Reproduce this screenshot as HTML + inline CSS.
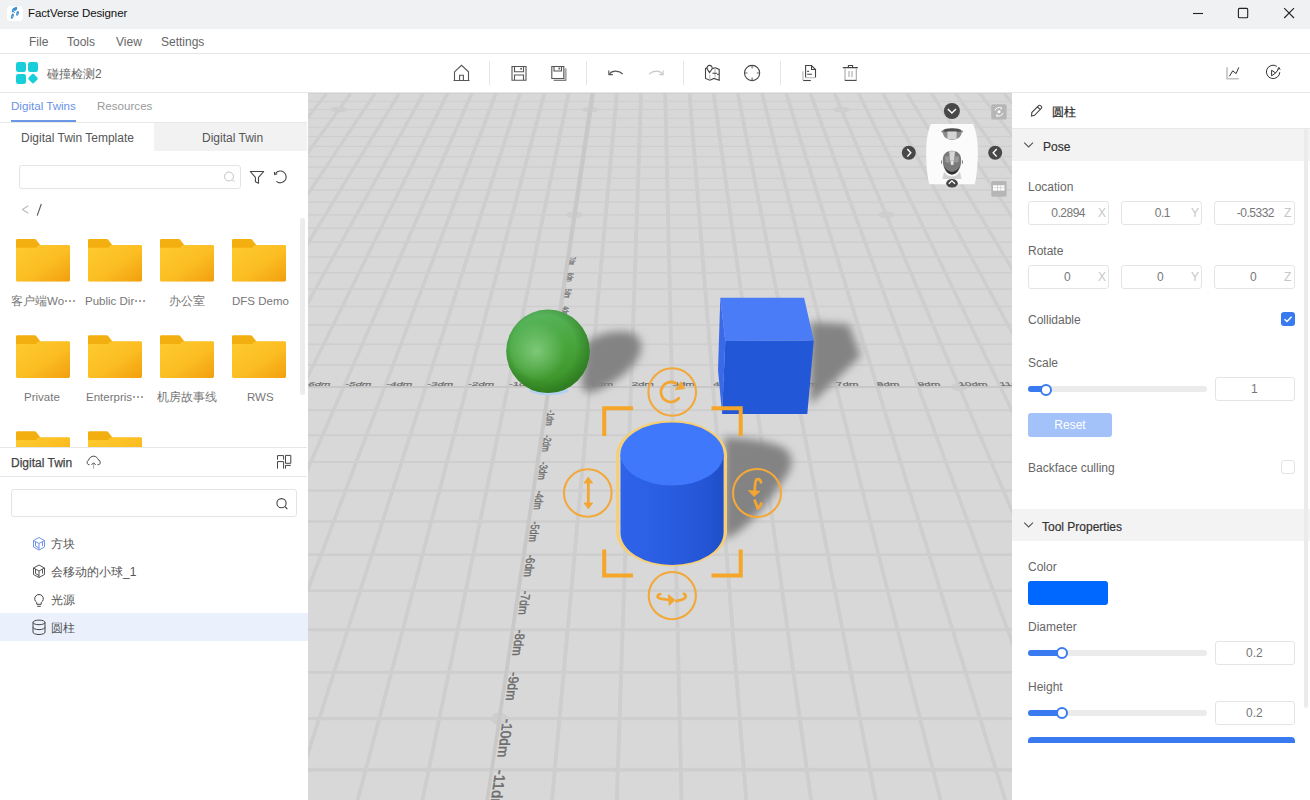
<!DOCTYPE html>
<html><head><meta charset="utf-8"><title>FactVerse Designer</title>
<style>
*{box-sizing:border-box;margin:0;padding:0}
html,body{width:1310px;height:800px;overflow:hidden;background:#fff;font-family:"Liberation Sans",sans-serif;font-size:12px;color:#333}
.a{position:absolute}
.t{position:absolute;white-space:nowrap;line-height:14px}
svg{position:absolute;overflow:hidden}
.inp{position:absolute;border:1px solid #e4e4e4;border-radius:3px;background:#fff}
</style></head><body>
<svg style="left:308px;top:93px" width="704" height="707" viewBox="308 93 704 707">
<defs>
<radialGradient id="sph" cx="0.42" cy="0.45" r="0.62" fx="0.34" fy="0.45">
<stop offset="0" stop-color="#72c46a"/><stop offset="0.35" stop-color="#4aa83f"/><stop offset="0.8" stop-color="#338f2a"/><stop offset="1" stop-color="#2a7a22"/>
</radialGradient>
<linearGradient id="cyl" x1="0" y1="0" x2="1" y2="0">
<stop offset="0" stop-color="#2e62e8"/><stop offset="0.25" stop-color="#2c60e6"/><stop offset="0.8" stop-color="#2456d6"/><stop offset="1" stop-color="#1f4ec8"/>
</linearGradient>
<filter id="gb" x="-5%" y="-5%" width="110%" height="110%"><feGaussianBlur stdDeviation="0.6"/></filter>
<filter id="blur6" x="-50%" y="-50%" width="200%" height="200%"><feGaussianBlur stdDeviation="4.2"/></filter>
<filter id="blur4" x="-50%" y="-50%" width="200%" height="200%"><feGaussianBlur stdDeviation="3"/></filter>
</defs>
<rect x="308" y="93" width="704" height="707" fill="#d8d8d8"/>
<g filter="url(#gb)">
<polygon points="206.22,91.00 210.12,91.00 -551.22,804.00 -555.12,804.00" fill="#cecece"/>
<polygon points="230.27,91.00 234.17,91.00 -486.23,804.00 -490.13,804.00" fill="#cecece"/>
<polygon points="254.33,91.00 258.23,91.00 -421.24,804.00 -425.14,804.00" fill="#cecece"/>
<polygon points="278.38,91.00 282.28,91.00 -356.25,804.00 -360.15,804.00" fill="#cecece"/>
<polygon points="302.44,91.00 306.34,91.00 -291.26,804.00 -295.16,804.00" fill="#cecece"/>
<polygon points="326.49,91.00 330.39,91.00 -226.27,804.00 -230.17,804.00" fill="#cecece"/>
<polygon points="350.54,91.00 354.44,91.00 -161.28,804.00 -165.18,804.00" fill="#cecece"/>
<polygon points="374.60,91.00 378.50,91.00 -96.30,804.00 -100.20,804.00" fill="#cecece"/>
<polygon points="398.65,91.00 402.55,91.00 -31.31,804.00 -35.21,804.00" fill="#cecece"/>
<polygon points="422.71,91.00 426.61,91.00 33.68,804.00 29.78,804.00" fill="#cecece"/>
<polygon points="446.76,91.00 450.66,91.00 98.67,804.00 94.77,804.00" fill="#cecece"/>
<polygon points="470.82,91.00 474.72,91.00 163.66,804.00 159.76,804.00" fill="#cecece"/>
<polygon points="494.87,91.00 498.77,91.00 228.65,804.00 224.75,804.00" fill="#cecece"/>
<polygon points="518.93,91.00 522.83,91.00 293.64,804.00 289.74,804.00" fill="#cecece"/>
<polygon points="542.98,91.00 546.88,91.00 358.63,804.00 354.73,804.00" fill="#cecece"/>
<polygon points="567.04,91.00 570.94,91.00 423.62,804.00 419.72,804.00" fill="#cecece"/>
<polygon points="615.15,91.00 619.05,91.00 553.60,804.00 549.70,804.00" fill="#cecece"/>
<polygon points="639.20,91.00 643.10,91.00 618.59,804.00 614.69,804.00" fill="#cecece"/>
<polygon points="663.26,91.00 667.16,91.00 683.58,804.00 679.68,804.00" fill="#cecece"/>
<polygon points="687.31,91.00 691.21,91.00 748.57,804.00 744.67,804.00" fill="#cecece"/>
<polygon points="711.37,91.00 715.27,91.00 813.55,804.00 809.65,804.00" fill="#cecece"/>
<polygon points="735.42,91.00 739.32,91.00 878.54,804.00 874.64,804.00" fill="#cecece"/>
<polygon points="759.48,91.00 763.38,91.00 943.53,804.00 939.63,804.00" fill="#cecece"/>
<polygon points="783.53,91.00 787.43,91.00 1008.52,804.00 1004.62,804.00" fill="#cecece"/>
<polygon points="807.59,91.00 811.49,91.00 1073.51,804.00 1069.61,804.00" fill="#cecece"/>
<polygon points="831.64,91.00 835.54,91.00 1138.50,804.00 1134.60,804.00" fill="#cecece"/>
<polygon points="855.70,91.00 859.60,91.00 1203.49,804.00 1199.59,804.00" fill="#cecece"/>
<polygon points="879.75,91.00 883.65,91.00 1268.48,804.00 1264.58,804.00" fill="#cecece"/>
<polygon points="903.81,91.00 907.71,91.00 1333.47,804.00 1329.57,804.00" fill="#cecece"/>
<polygon points="927.86,91.00 931.76,91.00 1398.46,804.00 1394.56,804.00" fill="#cecece"/>
<polygon points="951.92,91.00 955.82,91.00 1463.45,804.00 1459.55,804.00" fill="#cecece"/>
<polygon points="975.97,91.00 979.87,91.00 1528.44,804.00 1524.54,804.00" fill="#cecece"/>
<polygon points="1000.03,91.00 1003.93,91.00 1593.43,804.00 1589.53,804.00" fill="#cecece"/>
<polygon points="1024.08,91.00 1027.98,91.00 1658.42,804.00 1654.52,804.00" fill="#cecece"/>
<polygon points="1048.14,91.00 1052.04,91.00 1723.40,804.00 1719.50,804.00" fill="#cecece"/>
<polygon points="1072.19,91.00 1076.09,91.00 1788.39,804.00 1784.49,804.00" fill="#cecece"/>
<polygon points="1096.25,91.00 1100.15,91.00 1853.38,804.00 1849.48,804.00" fill="#cecece"/>
<polygon points="308.00,767.83 1012.00,767.83 1012.00,771.42 308.00,771.42" fill="#cecece"/>
<polygon points="308.00,717.03 1012.00,717.03 1012.00,720.35 308.00,720.35" fill="#cecece"/>
<polygon points="308.00,670.73 1012.00,670.73 1012.00,673.81 308.00,673.81" fill="#cecece"/>
<polygon points="308.00,628.35 1012.00,628.35 1012.00,631.23 308.00,631.23" fill="#cecece"/>
<polygon points="308.00,589.43 1012.00,589.43 1012.00,592.12 308.00,592.12" fill="#cecece"/>
<polygon points="308.00,553.55 1012.00,553.55 1012.00,556.08 308.00,556.08" fill="#cecece"/>
<polygon points="308.00,520.37 1012.00,520.37 1012.00,522.76 308.00,522.76" fill="#cecece"/>
<polygon points="308.00,489.59 1012.00,489.59 1012.00,491.86 308.00,491.86" fill="#cecece"/>
<polygon points="308.00,460.97 1012.00,460.97 1012.00,463.12 308.00,463.12" fill="#cecece"/>
<polygon points="308.00,434.28 1012.00,434.28 1012.00,436.33 308.00,436.33" fill="#cecece"/>
<polygon points="308.00,409.34 1012.00,409.34 1012.00,411.30 308.00,411.30" fill="#cecece"/>
<polygon points="308.00,364.06 1012.00,364.06 1012.00,365.85 308.00,365.85" fill="#cecece"/>
<polygon points="308.00,343.44 1012.00,343.44 1012.00,345.16 308.00,345.16" fill="#cecece"/>
<polygon points="308.00,324.01 1012.00,324.01 1012.00,325.67 308.00,325.67" fill="#cecece"/>
<polygon points="308.00,305.68 1012.00,305.68 1012.00,307.27 308.00,307.27" fill="#cecece"/>
<polygon points="308.00,288.34 1012.00,288.34 1012.00,289.89 308.00,289.89" fill="#cecece"/>
<polygon points="308.00,271.93 1012.00,271.93 1012.00,273.43 308.00,273.43" fill="#cecece"/>
<polygon points="308.00,256.37 1012.00,256.37 1012.00,257.82 308.00,257.82" fill="#cecece"/>
<polygon points="308.00,241.60 1012.00,241.60 1012.00,243.01 308.00,243.01" fill="#cecece"/>
<polygon points="308.00,227.56 1012.00,227.56 1012.00,228.92 308.00,228.92" fill="#cecece"/>
<polygon points="308.00,214.19 1012.00,214.19 1012.00,215.52 308.00,215.52" fill="#cecece"/>
<polygon points="308.00,201.44 1012.00,201.44 1012.00,202.74 308.00,202.74" fill="#cecece"/>
<polygon points="308.00,189.29 1012.00,189.29 1012.00,190.55 308.00,190.55" fill="#cecece"/>
<polygon points="308.00,177.68 1012.00,177.68 1012.00,178.91 308.00,178.91" fill="#cecece"/>
<polygon points="308.00,166.58 1012.00,166.58 1012.00,167.78 308.00,167.78" fill="#cecece"/>
<polygon points="308.00,155.95 1012.00,155.95 1012.00,157.13 308.00,157.13" fill="#cecece"/>
<polygon points="308.00,145.77 1012.00,145.77 1012.00,146.93 308.00,146.93" fill="#cecece"/>
<polygon points="308.00,136.01 1012.00,136.01 1012.00,137.15 308.00,137.15" fill="#cecece"/>
<polygon points="308.00,126.65 1012.00,126.65 1012.00,127.76 308.00,127.76" fill="#cecece"/>
<polygon points="308.00,117.65 1012.00,117.65 1012.00,118.75 308.00,118.75" fill="#cecece"/>
<polygon points="308.00,109.01 1012.00,109.01 1012.00,110.08 308.00,110.08" fill="#cecece"/>
<polygon points="308.00,100.69 1012.00,100.69 1012.00,101.75 308.00,101.75" fill="#cecece"/>
<polygon points="308.00,92.68 1012.00,92.68 1012.00,93.72 308.00,93.72" fill="#cecece"/>
<ellipse cx="339.08" cy="109.54" rx="8.50" ry="2.88" fill="#cecece"/>
<ellipse cx="499.39" cy="718.69" rx="8.50" ry="6.09" fill="#cecece"/>
<ellipse cx="548.89" cy="386.92" rx="8.50" ry="4.01" fill="#cecece"/>
<ellipse cx="574.56" cy="214.85" rx="8.50" ry="3.25" fill="#cecece"/>
<ellipse cx="590.28" cy="109.54" rx="8.50" ry="2.88" fill="#cecece"/>
<ellipse cx="959.33" cy="386.92" rx="8.50" ry="4.01" fill="#cecece"/>
<ellipse cx="886.22" cy="214.85" rx="8.50" ry="3.25" fill="#cecece"/>
<ellipse cx="841.47" cy="109.54" rx="8.50" ry="2.88" fill="#cecece"/>
</g>
<g filter="url(#gb)">
<polygon points="590.74,91.00 595.34,91.00 488.46,804.00 484.86,804.00" fill="#c8c8c8"/>
<polygon points="308.00,385.92 1012.00,385.92 1012.00,387.92 308.00,387.92" fill="#c8c8c8"/>
</g>
<g fill="#6c6c6c" stroke="#6c6c6c" stroke-width="0.3" font-family="Liberation Sans" font-size="10">
<text transform="matrix(1.1474,0.0000,-0.3028,0.5503,262.82,385.79)">-7dm</text>
<text transform="matrix(1.1474,0.0000,-0.2712,0.5503,303.80,385.79)">-6dm</text>
<text transform="matrix(1.1474,0.0000,-0.2396,0.5503,344.78,385.79)">-5dm</text>
<text transform="matrix(1.1474,0.0000,-0.2080,0.5503,385.76,385.79)">-4dm</text>
<text transform="matrix(1.1474,0.0000,-0.1764,0.5503,426.74,385.79)">-3dm</text>
<text transform="matrix(1.1474,0.0000,-0.1448,0.5503,467.72,385.79)">-2dm</text>
<text transform="matrix(1.1474,0.0000,-0.1132,0.5503,508.69,385.79)">-1dm</text>
<text transform="matrix(1.1474,0.0000,-0.0500,0.5503,590.65,385.79)">1dm</text>
<text transform="matrix(1.1474,0.0000,-0.0184,0.5503,631.63,385.79)">2dm</text>
<text transform="matrix(1.1474,0.0000,0.0131,0.5503,672.61,385.79)">3dm</text>
<text transform="matrix(1.1474,0.0000,0.0447,0.5503,713.59,385.79)">4dm</text>
<text transform="matrix(1.1474,0.0000,0.0763,0.5503,754.57,385.79)">5dm</text>
<text transform="matrix(1.1474,0.0000,0.1079,0.5503,795.55,385.79)">6dm</text>
<text transform="matrix(1.1474,0.0000,0.1395,0.5503,836.53,385.79)">7dm</text>
<text transform="matrix(1.1474,0.0000,0.1711,0.5503,877.51,385.79)">8dm</text>
<text transform="matrix(1.1474,0.0000,0.2027,0.5503,918.48,385.79)">9dm</text>
<text transform="matrix(1.1474,0.0000,0.2343,0.5503,959.46,385.79)">10dm</text>
<text transform="matrix(1.1474,0.0000,0.2659,0.5503,1000.44,385.79)">11dm</text>
<text transform="matrix(1.1474,0.0000,0.2975,0.5503,1041.42,385.79)">12dm</text>
<text transform="matrix(-0.2409,1.6526,-1.6136,-0.0000,487.38,825.78)">-12dm</text>
<text transform="matrix(-0.2180,1.4957,-1.5351,-0.0000,495.57,769.63)">-11dm</text>
<text transform="matrix(-0.1982,1.3601,-1.4638,-0.0000,502.99,718.69)">-10dm</text>
<text transform="matrix(-0.1811,1.2421,-1.3989,-0.0000,509.76,672.27)">-9dm</text>
<text transform="matrix(-0.1660,1.1388,-1.3395,-0.0000,515.95,629.79)">-8dm</text>
<text transform="matrix(-0.1528,1.0480,-1.2849,-0.0000,521.64,590.78)">-7dm</text>
<text transform="matrix(-0.1410,0.9675,-1.2346,-0.0000,526.88,554.81)">-6dm</text>
<text transform="matrix(-0.1306,0.8960,-1.1881,-0.0000,531.73,521.56)">-5dm</text>
<text transform="matrix(-0.1213,0.8321,-1.1450,-0.0000,536.22,490.72)">-4dm</text>
<text transform="matrix(-0.1129,0.7749,-1.1049,-0.0000,540.40,462.05)">-3dm</text>
<text transform="matrix(-0.1054,0.7233,-1.0675,-0.0000,544.30,435.31)">-2dm</text>
<text transform="matrix(-0.0986,0.6767,-1.0326,-0.0000,547.94,410.32)">-1dm</text>
<text transform="matrix(-0.0869,0.5961,-0.9691,-0.0000,554.55,364.95)">1dm</text>
<text transform="matrix(-0.0818,0.5611,-0.9402,-0.0000,557.57,344.30)">2dm</text>
<text transform="matrix(-0.0771,0.5291,-0.9130,-0.0000,560.40,324.84)">3dm</text>
<text transform="matrix(-0.0728,0.4997,-0.8873,-0.0000,563.08,306.47)">4dm</text>
<text transform="matrix(-0.0689,0.4728,-0.8630,-0.0000,565.61,289.12)">5dm</text>
<text transform="matrix(-0.0653,0.4479,-0.8401,-0.0000,568.00,272.68)">6dm</text>
<text transform="matrix(-0.0619,0.4250,-0.8183,-0.0000,570.28,257.10)">7dm</text>
</g>
<!-- shadows -->
<g filter="url(#blur6)" fill="#838383">
<path d="M586 344 C594 334 614 330 628 332 C642 334 644 348 638 358 C630 372 612 384 596 391 C586 395 580 390 582 378 Z"/>
<path d="M810 322 L849 324.5 L860.5 356 L810 405 Z"/>
<path d="M724 437 C746 438 770 441 784 448 C794 455 793 467 787 475 C777 490 766 506 754 518 C742 530 732 537 724 539 Z"/>
</g>
<!-- sphere -->
<linearGradient id="sphb" x1="0" y1="0" x2="0.25" y2="1">
<stop offset="0" stop-color="#5cb866"/><stop offset="0.5" stop-color="#4aa840"/><stop offset="1" stop-color="#3d9428"/>
</linearGradient>
<radialGradient id="sphh" cx="0.36" cy="0.5" r="0.35">
<stop offset="0" stop-color="#8fd38c" stop-opacity="0.75"/><stop offset="1" stop-color="#8fd38c" stop-opacity="0"/>
</radialGradient>
<radialGradient id="sphr" cx="0.45" cy="0.45" r="0.55">
<stop offset="0.7" stop-color="#1f5f18" stop-opacity="0"/><stop offset="1" stop-color="#1f5f18" stop-opacity="0.45"/>
</radialGradient>
<path d="M530 390 A 22 7 0 0 0 568 390" stroke="#b4d0f2" stroke-width="3.5" fill="none"/>
<circle cx="548" cy="351.3" r="41.8" fill="url(#sphb)"/>
<circle cx="548" cy="351.3" r="41.8" fill="url(#sphh)"/>
<circle cx="548" cy="351.3" r="41.8" fill="url(#sphr)"/>
<!-- cube -->
<polygon points="720.3,297.8 804.1,297.8 813.8,340.4 725.3,341" fill="#497cf6"/>
<polygon points="720.3,297.8 725.3,341 722.1,414 718,370" fill="#3a6ae8"/>
<polygon points="725.3,341 813.8,340.4 807.3,414 722.1,414" fill="#2257d8"/>
<!-- cylinder -->
<path d="M617.6 454 V533 A54 34 0 0 0 725.4 533 V454 A54 34 0 0 0 617.6 454 Z" fill="none" stroke="#f6cf74" stroke-width="3.2"/>
<path d="M620.5 454 V532.7 A51.5 32.3 0 0 0 723.5 532.7 V454 Z" fill="url(#cyl)"/>
<ellipse cx="672" cy="454" rx="51.6" ry="31.6" fill="#3f78fa"/>
<!-- gizmo brackets -->
<g fill="none" stroke="#f5a628" stroke-width="4" stroke-linecap="butt">
<path d="M604.2 436 V408.3 H633"/>
<path d="M711.5 408.3 H740.7 V436"/>
<path d="M604.2 549.5 V575.5 H633"/>
<path d="M711.5 575.5 H740.7 V549.5"/>
</g>
<g fill="none" stroke="#f2a83a" stroke-width="2.1">
<circle cx="672.2" cy="392" r="23.8"/>
<circle cx="587.8" cy="493" r="23.8"/>
<circle cx="757" cy="493" r="24"/>
<circle cx="672.3" cy="595.6" r="23.6"/>
</g>
<g fill="none" stroke="#f3a632" stroke-width="2.8" stroke-linecap="round" stroke-linejoin="round">
<path d="M678.8 398.2 A 10 10 0 1 1 675.8 383.3"/>
<path d="M588.3 482 V504"/>
<path d="M660.2 594.2 C657.3 594.8 656.8 597.3 659.2 598.3 C662 599.3 666 599.6 669.5 599.8"/>
<path d="M676.5 601 C680.5 600.3 684 599.5 685.3 597.5 C686.2 596 685.5 594.3 684 593.8"/>
<path d="M761 482.4 C760.5 479.3 758 478.2 756.2 480 C755.3 481 755 484 754.7 491"/>
<path d="M754.8 500.6 L757.7 508.3 C759.5 507 760.8 505.5 761.2 503.5"/>
</g>
<g fill="#f3a632" stroke="#f3a632" stroke-width="0.8" stroke-linejoin="round">
<path d="M675.2 389.8 L684.6 388.6 L681.2 381.6 Z"/>
<path d="M588.3 477.1 L592.6 483 H584 Z M588.3 508.8 L592.6 503 H584 Z"/>
<path d="M668.4 594.6 L675 600.1 L669.2 605.4 Z"/>
<path d="M748.4 490.6 L760 491.3 L754 496.6 Z"/>
</g>
<!-- nav cube -->
<path d="M931 123.9 H973 C975.8 130 977.8 138 977.8 152 C977.8 166 976.5 177 974.7 184.3 H929.3 C927.4 177 926.2 166 926.2 152 C926.2 138 928.2 130 931 123.9 Z" fill="#fbfbfb"/>
<path d="M941.2 131.8 C941.5 128.2 962.5 128.2 963.2 131.8 L961.6 133 C960.8 137.5 957 139.8 952.2 139.8 C947.4 139.8 943.6 137.5 942.8 133 Z" fill="#8c8c8c"/>
<path d="M943.2 130.2 C945 127.5 959.5 127.5 961.2 130.2 L960.5 131.8 H944 Z" fill="#4f4f4f"/>
<path d="M947.4 131.6 H956.6 V138.4 C954.5 139.6 949.5 139.6 947.4 138.4 Z" fill="#d4d4d4"/>
<path d="M944 171.5 C947 178 957 178 960 171.5 L961.5 179 H942.5 Z" fill="#d2d2d2"/>
<path d="M942.8 161 C942.6 154.5 946 150.8 952 150.8 C958 150.8 961.4 154.5 961.2 161 C961 168.5 957.5 174.5 952 174.5 C946.5 174.5 943 168.5 942.8 161 Z" fill="#7a7a7a"/>
<path d="M944 165 C945.5 171 948.5 174.5 952 174.5 C955.5 174.5 958.5 171 960 165 C958.5 169.5 955.5 171.8 952 171.8 C948.5 171.8 945.5 169.5 944 165 Z" fill="#2e2e2e"/>
<path d="M949.2 151.2 H955 L954.2 160.5 H949.8 Z" fill="#d6d6d6"/>
<path d="M950.4 160.5 H953.8 L953.3 165 H950.9 Z" fill="#e2e2e2"/>
<path d="M945 156.5 H949.6 V163 L945.6 162 Z M954.4 156.5 H959 L958.4 162 L954.4 163 Z" fill="#9a9a9a"/>
<path d="M941.3 159.8 C940.6 161.5 941 163.5 942.3 164.5 Z M962.7 159.8 C963.4 161.5 963 163.5 961.7 164.5 Z" fill="#555"/>
<circle cx="951.9" cy="111" r="8" fill="#484848"/>
<path d="M947.8 109 L951.9 113 L956 109" stroke="#fff" stroke-width="1.4" fill="none"/>
<circle cx="908.8" cy="152.8" r="7" fill="#484848"/>
<path d="M907.3 149 L910.8 152.8 L907.3 156.6" stroke="#fff" stroke-width="1.4" fill="none"/>
<circle cx="995.2" cy="152.8" r="7" fill="#484848"/>
<path d="M996.7 149 L993.2 152.8 L996.7 156.6" stroke="#fff" stroke-width="1.4" fill="none"/>
<ellipse cx="952" cy="183.2" rx="5.8" ry="4.3" fill="#484848"/>
<path d="M948.8 183.8 L951.9 180.8 L955 183.8" stroke="#fff" stroke-width="1.2" fill="none"/>
<rect x="991.3" y="104.2" width="15.3" height="15.2" rx="1.5" fill="#b6b6b6"/>
<path d="M995 110.5 A4.3 4.3 0 0 1 1001.5 108.2 M1003 113 A4.3 4.3 0 0 1 996.5 115.4" stroke="#fff" stroke-width="1" fill="none"/>
<path d="M1000.6 107.2 L1002 108.4 L1000.4 109.4 M997.4 114.4 L996 115.6 L997.6 116.6" stroke="#fff" stroke-width="0.8" fill="none"/>
<circle cx="999" cy="111.8" r="1.5" fill="#fff"/>
<rect x="991.3" y="181" width="15.3" height="15.8" rx="1.5" fill="#b6b6b6"/>
<g fill="#fff"><rect x="993" y="185.3" width="4.3" height="2.3"/><rect x="997.8" y="185.3" width="2.8" height="2.3"/><rect x="1001.1" y="185.3" width="3.4" height="2.3"/>
<rect x="993" y="188.1" width="4.3" height="2.5"/><rect x="997.8" y="188.1" width="2.8" height="2.5"/><rect x="1001.1" y="188.1" width="3.4" height="2.5"/></g>
</svg>
<!-- title bar -->
<div class="a" style="left:0;top:0;width:1310px;height:29px;background:#eff1f3"></div>
<div class="a" style="left:7px;top:5.5px;width:16.2px;height:15.6px;background:#fff;border-radius:4px"></div>
<svg style="left:0;top:0" width="28" height="28" viewBox="0 0 28 28">
<g fill="#3f8fd2">
<ellipse cx="13.5" cy="10" rx="1.4" ry="2.6" transform="rotate(30 13.5 10)"/>
<ellipse cx="15.8" cy="8.8" rx="1.3" ry="2.1" transform="rotate(25 15.8 8.8)"/>
<ellipse cx="17.5" cy="13.4" rx="1.3" ry="2.5" transform="rotate(15 17.5 13.4)"/>
<ellipse cx="12.4" cy="16.2" rx="1.3" ry="2.8" transform="rotate(18 12.4 16.2)"/>
<circle cx="14.3" cy="12.4" r="0.5"/>
</g>
<g fill="#8fd0f5"><circle cx="13.2" cy="10.3" r="0.6"/><circle cx="17.4" cy="13.8" r="0.6"/><circle cx="12.4" cy="16.6" r="0.6"/></g>
</svg>
<div class="t" style="left:28px;top:6px;font-size:11.5px;color:#111;letter-spacing:-0.1px">FactVerse Designer</div>
<svg style="left:1190px;top:6px" width="110" height="16" viewBox="1190 6 110 16">
<path d="M1193 13.5h10" stroke="#222" stroke-width="1.1" fill="none"/>
<rect x="1238.4" y="8.4" width="9.3" height="9.3" rx="1" stroke="#222" stroke-width="1.1" fill="none"/>
<path d="M1284.2 8.2l9.8 9.8M1294 8.2l-9.8 9.8" stroke="#222" stroke-width="1.1" fill="none"/>
</svg>
<!-- menu -->
<div class="a" style="left:0;top:53px;width:1310px;height:1px;background:#e6e6e6"></div>
<div class="t" style="left:29px;top:35px;color:#666">File</div>
<div class="t" style="left:67px;top:35px;color:#666">Tools</div>
<div class="t" style="left:116px;top:35px;color:#666">View</div>
<div class="t" style="left:161px;top:35px;color:#666">Settings</div>
<!-- toolbar -->
<div class="a" style="left:0;top:92px;width:1310px;height:1px;background:#e6e6e6"></div>
<svg style="left:16px;top:62px" width="23" height="23" viewBox="0 0 23 23">
<rect x="0" y="0" width="10" height="10" rx="2.2" fill="#18cfd9"/>
<rect x="12" y="0" width="10" height="10" rx="2.2" fill="#18cfd9"/>
<rect x="0" y="12" width="10" height="10" rx="2.2" fill="#18cfd9"/>
<rect x="13.2" y="12.8" width="7.6" height="7.6" rx="1.6" fill="#18cfd9" transform="rotate(45 17 16.6)"/>
</svg>
<div class="t" style="left:47px;top:67px;color:#666">碰撞检测2</div>
<svg style="left:440px;top:55px" width="430" height="37" viewBox="440 55 430 37" fill="none" stroke="#555" stroke-width="1.1">
<!-- home -->
<path d="M454.5 71.8 L461.5 65.3 L468.5 71.8 V80.3 M454.5 71.8 V80.3 M453.5 80.5 H469.5 M459.6 80.3 V75.3 H463.4 V80.3"/>
<!-- separators -->
<path d="M489.5 61 V85 M586.5 61 V85 M683.5 61 V85 M780.5 61 V85" stroke="#e6e6e6" stroke-width="1"/>
<!-- save -->
<path d="M512 66.5 H526 V80.3 H512 Z M514.5 66.5 V71.8 H523.5 V66.5 M514.5 80.3 V75 H523.5 V80.3"/>
<rect x="520.3" y="67.8" width="1.6" height="1.8" fill="#555" stroke="none"/>
<!-- save as -->
<path d="M551.8 66.5 H563.8 V78.5 H551.8 Z M554 66.5 V71 H561.5 V66.5 M553.6 80.3 H565.8 V68.5" />
<rect x="558.5" y="67.6" width="1.6" height="1.8" fill="#555" stroke="none"/>
<rect x="564.2" y="69" width="1.8" height="10.5" fill="#aaa" stroke="none"/>
<!-- undo -->
<path d="M609.5 73.8 C612 70.5 618.5 70 622.8 74" />
<path d="M608.8 70.6 V74.6 H612.8" stroke-linejoin="round"/>
<!-- redo -->
<path d="M662.5 73.8 C660 70.5 653.5 70 649.2 74" stroke="#c8c8c8"/>
<path d="M663.2 70.6 V74.6 H659.2" stroke="#c8c8c8"/>
<!-- map -->
<path d="M707.6 67.9 L705.5 68.5 V78.5 L709.8 80.2 L714 78.4 L719.2 80.2 V69.4 L715.3 67.8 L712.3 68.6" stroke="#444"/>
<path d="M709.6 72.6 L707.2 69 A2.6 2.6 0 1 1 712 69 Z" stroke="#444"/>
<path d="M709.8 74.5 V79.5 M715 68.5 V77.5" stroke="#bdbdbd" stroke-width="1.2"/>
<path d="M712.4 73.3 H716.9 M716.9 74.3 H719.2" stroke="#444"/>
<!-- target -->
<circle cx="752.1" cy="73" r="7.6" stroke="#444"/>
<path d="M752.1 65.4 V68.4 M752.1 77.6 V80.6 M744.5 73 H747.5 M756.7 73 H759.7" stroke="#666"/>
<!-- copy -->
<path d="M805.6 77.4 V65.5 H811.5 L815.5 69.5 V77.4 M811.5 65.5 V69.5 H815.5 M807.2 71.4 H808.9 M807.2 74.3 H812" stroke="#444"/>
<path d="M805.8 77.7 H815.3" stroke="#bbb"/>
<path d="M802.9 71.2 V80" stroke="#bbb" stroke-width="1.2"/>
<path d="M803.2 80.5 H810.8" stroke="#444"/>
<!-- trash -->
<path d="M842.8 67.6 H857.8 M848.4 67.4 V65.5 H852.6 V67.4" stroke="#444"/>
<path d="M845 68.2 V80.2 M856.3 68.2 V80.2 M849 71 V77 M852 71 V77" stroke="#a8a8a8"/>
<path d="M844.8 80.4 H856.5" stroke="#444"/>
</svg>
<svg style="left:1220px;top:60px" width="70" height="26" viewBox="1220 60 70 26" fill="none" stroke="#333" stroke-width="1">
<path d="M1227 67.2 V78.8 H1238.8" stroke="#c2c2c2" stroke-width="1.6"/>
<path d="M1229.4 76.3 L1232.7 70.8 L1236.1 73.6 L1238.8 67.4"/>
<path d="M1276.8 66.3 A6.7 6.7 0 1 0 1279.8 72.2"/>
<path d="M1271.6 70.2 V75.8 L1275.6 73 Z"/>
<path d="M1275.6 73 L1278.9 68.6 M1277.6 69.6 L1278.9 67.4 L1280.2 69.6"/>
</svg>
<!-- left panel -->

<div class="t" style="left:11px;top:99px;color:#6a93e8;font-size:11.6px">Digital Twins</div>
<div class="a" style="left:11px;top:120px;width:65px;height:2px;background:#6b98e6"></div>
<div class="t" style="left:97px;top:99px;color:#9a9a9a;font-size:11.6px">Resources</div>
<div class="a" style="left:0;top:122px;width:307px;height:1px;background:#e8e8e8"></div>
<div class="a" style="left:154px;top:123px;width:153px;height:28px;background:#f2f2f2"></div>
<div class="t" style="left:21px;top:131px;color:#555">Digital Twin Template</div>
<div class="t" style="left:202px;top:131px;color:#555">Digital Twin</div>
<div class="inp" style="left:19px;top:165px;width:222px;height:24px"></div>
<svg style="left:218px;top:165px" width="80" height="24" viewBox="218 165 80 24" fill="none">
<circle cx="229" cy="176.5" r="4.5" stroke="#c4c4c4" stroke-width="1"/>
<path d="M232.3 179.8 L234.5 182" stroke="#c4c4c4" stroke-width="1"/>
<path d="M250.3 171.5 H263.7 L258.5 177.4 V183.2 L255.4 181.8 V177.4 Z" stroke="#444" stroke-width="1.1" stroke-linejoin="round"/>
<path d="M276.4 181.4 A5.9 5.9 0 1 0 275.6 173.3" stroke="#444" stroke-width="1.1"/>
<path d="M274.4 172 L274.7 174.6 L277.2 173.8" stroke="#444" stroke-width="1.1"/>
</svg>
<svg style="left:18px;top:200px" width="30" height="20" viewBox="18 200 30 20" fill="none">
<path d="M28.3 205.8 L22.5 209.5 L28.3 213.2" stroke="#bbb" stroke-width="1.1"/>
<path d="M41.3 204 L37.2 215.6" stroke="#555" stroke-width="1.1"/>
</svg>
<svg style="left:0;top:218px" width="300" height="229" viewBox="0 218 300 229">
<defs>
<linearGradient id="fg" x1="0" y1="0" x2="1" y2="1">
<stop offset="0" stop-color="#fecb2e"/><stop offset="0.55" stop-color="#fbbd22"/><stop offset="1" stop-color="#f29f0d"/>
</linearGradient>
<symbol id="fold" viewBox="0 0 54 43" width="54" height="43">
<path d="M0 1.5 Q0 0.3 1.5 0.3 H18.8 Q19.6 0.3 20.2 1 L24.4 6.5 H52.5 Q54 6.5 54 8 V12 H0 Z" fill="#f3ae10"/>
<path d="M0 10.2 Q0 9 1.2 9 H20.3 L22.5 6.6 H52.6 Q54 6.6 54 8 V41.6 Q54 43 52.6 43 H1.4 Q0 43 0 41.6 Z" fill="url(#fg)"/>
</symbol>
</defs>
<use href="#fold" x="16" y="238.7"/><use href="#fold" x="88" y="238.7"/><use href="#fold" x="160" y="238.7"/><use href="#fold" x="232" y="238.7"/>
<use href="#fold" x="16" y="335"/><use href="#fold" x="88" y="335"/><use href="#fold" x="160" y="335"/><use href="#fold" x="232" y="335"/>
<use href="#fold" x="16" y="431"/><use href="#fold" x="88" y="431"/>
</svg>
<div class="a" style="left:0;top:447px;width:307px;height:353px;background:#fff"></div>
<div class="t" style="left:11px;top:294px;color:#777;font-size:11.5px">客户端Wo⋯</div>
<div class="t" style="left:85px;top:294px;color:#777;font-size:11.5px">Public Dir⋯</div>
<div class="t" style="left:169px;top:294px;color:#777;font-size:11.5px">办公室</div>
<div class="t" style="left:232px;top:294px;color:#777;font-size:11.5px">DFS Demo</div>
<div class="t" style="left:24px;top:390px;color:#777;font-size:11.5px">Private</div>
<div class="t" style="left:86px;top:390px;color:#777;font-size:11.5px">Enterpris⋯</div>
<div class="t" style="left:157px;top:390px;color:#777;font-size:11.5px">机房故事线</div>
<div class="t" style="left:247px;top:390px;color:#777;font-size:11.5px">RWS</div>
<div class="a" style="left:300px;top:218px;width:5px;height:177px;background:#ececec;border-radius:3px"></div>
<div class="a" style="left:0;top:447px;width:307px;height:1px;background:#e6e6e6"></div>
<div class="t" style="left:11px;top:456px;color:#444;font-size:12px;-webkit-text-stroke:0.25px #444">Digital Twin</div>
<svg style="left:80px;top:450px" width="220" height="26" viewBox="80 450 220 26" fill="none" stroke="#444" stroke-width="1">
<path d="M89.5 464.6 H88.6 C86.8 464.6 86.6 460.6 88.6 460.2 C89.6 457.2 91.5 456.2 93.8 456.2 C96.5 456.2 97.5 458.2 98.2 459.6 C100.6 460.2 101 464.6 98.6 464.6 H97.5"/>
<path d="M93.6 468.6 V463.2" stroke="#aaa"/>
<path d="M91.5 464.9 L93.6 462.8 L95.7 464.9"/>
<path d="M277.5 459.6 V455.6 H283.6 V459.6 M277.5 468.6 V461.6 H283.6 V468.6 M285.5 455.4 H290.8 V463.3 H285.5 Z M285.5 468.6 V465.4 H290.8"/>
</svg>
<div class="a" style="left:0;top:476px;width:307px;height:1px;background:#e8e8e8"></div>
<div class="inp" style="left:11px;top:489px;width:286px;height:28px"></div>
<svg style="left:270px;top:492px" width="24" height="22" viewBox="270 492 24 22" fill="none" stroke="#444" stroke-width="1.1">
<circle cx="281.5" cy="503.2" r="4.6"/><path d="M285 506.7 L287.3 509"/>
</svg>
<div class="a" style="left:0;top:613px;width:308px;height:28px;background:#eaf0fc"></div>
<svg style="left:28px;top:533px" width="22" height="105" viewBox="28 533 22 105" fill="none" stroke-width="1">
<g stroke="#7096e4"><path d="M39 537.5 L44.5 540.5 V547 L39 550 L33.5 547 V540.5 Z M33.5 540.5 L39 543.5 L44.5 540.5 M39 543.5 V550"/><path d="M35.5 541.6 V546 L39 548 M42.5 541.6 V546"/></g>
<g stroke="#555"><path d="M39 565 L44.5 568 V574.5 L39 577.5 L33.5 574.5 V568 Z M33.5 568 L39 571 L44.5 568 M39 571 V577.5"/><path d="M35.5 569.1 V573.5 L39 575.5 M42.5 569.1 V573.5"/></g>
<g stroke="#444"><path d="M36.8 602.5 A4.3 4.3 0 1 1 41.2 602.5 V604.3 H36.8 Z M37.2 606.3 H40.8"/></g>
<g stroke="#444"><ellipse cx="39" cy="622.4" rx="6" ry="2.3"/><path d="M33 622.4 V632.2 A6 2.3 0 0 0 45 632.2 V622.4 M33 627.3 A6 2.3 0 0 0 45 627.3"/></g>
</svg>
<div class="t" style="left:51px;top:537px;color:#555">方块</div>
<div class="t" style="left:51px;top:565px;color:#555">会移动的小球_1</div>
<div class="t" style="left:51px;top:593px;color:#555">光源</div>
<div class="t" style="left:51px;top:621px;color:#555">圆柱</div>
<!-- right panel -->
<div class="a" style="left:1012px;top:93px;width:298px;height:707px;background:#fff"></div>

<svg style="left:1028px;top:102px" width="18" height="18" viewBox="1028 102 18 18" fill="none" stroke="#444" stroke-width="1.1">
<path d="M1031.5 116 L1031.8 112.6 L1038.6 105.6 A1.3 1.3 0 0 1 1040.5 105.6 L1041.3 106.4 A1.3 1.3 0 0 1 1041.3 108.3 L1034.5 115.3 Z M1037.5 106.8 L1040.2 109.5"/>
</svg>
<div class="t" style="left:1052px;top:105px;color:#333;-webkit-text-stroke:0.25px #333">圆柱</div>
<div class="a" style="left:1012px;top:128px;width:298px;height:1px;background:#e8e8e8"></div>
<div class="a" style="left:1012px;top:129px;width:298px;height:32px;background:#f3f3f3"></div>
<svg style="left:1020px;top:138px" width="16" height="14" viewBox="1020 138 16 14" fill="none" stroke="#555" stroke-width="1.1"><path d="M1024.2 142.6 L1028.6 147 L1033 142.6"/></svg>
<div class="t" style="left:1043px;top:140px;color:#333;font-size:12px;-webkit-text-stroke:0.2px #333">Pose</div>
<div class="t" style="left:1028px;top:180px;color:#666">Location</div>
<div class="inp" style="left:1028px;top:201px;width:81px;height:24px"></div>
<div class="inp" style="left:1121px;top:201px;width:81px;height:24px"></div>
<div class="inp" style="left:1214px;top:201px;width:81px;height:24px"></div>
<div class="t" style="left:1028px;top:206px;width:57px;text-align:right;color:#777;letter-spacing:-0.5px">0.2894</div>
<div class="t" style="left:1098px;top:206px;color:#c6c6c6">X</div>
<div class="t" style="left:1121px;top:206px;width:49px;text-align:right;color:#777;letter-spacing:-0.5px">0.1</div>
<div class="t" style="left:1191px;top:206px;color:#c6c6c6">Y</div>
<div class="t" style="left:1214px;top:206px;width:60px;text-align:right;color:#777;letter-spacing:-0.5px">-0.5332</div>
<div class="t" style="left:1284px;top:206px;color:#c6c6c6">Z</div>
<div class="t" style="left:1028px;top:244px;color:#666">Rotate</div>
<div class="inp" style="left:1028px;top:265px;width:81px;height:24px"></div>
<div class="inp" style="left:1121px;top:265px;width:81px;height:24px"></div>
<div class="inp" style="left:1214px;top:265px;width:81px;height:24px"></div>
<div class="t" style="left:1064px;top:270px;color:#777">0</div>
<div class="t" style="left:1098px;top:270px;color:#c6c6c6">X</div>
<div class="t" style="left:1157px;top:270px;color:#777">0</div>
<div class="t" style="left:1191px;top:270px;color:#c6c6c6">Y</div>
<div class="t" style="left:1250px;top:270px;color:#777">0</div>
<div class="t" style="left:1284px;top:270px;color:#c6c6c6">Z</div>
<div class="t" style="left:1028px;top:313px;color:#666">Collidable</div>
<div class="a" style="left:1281px;top:312px;width:14px;height:14px;background:#3a7af0;border-radius:3px"></div>
<svg style="left:1281px;top:312px" width="14" height="14" viewBox="0 0 14 14" fill="none"><path d="M3.5 7.2 L6 9.6 L10.6 4.8" stroke="#fff" stroke-width="1.4"/></svg>
<div class="t" style="left:1028px;top:356px;color:#666">Scale</div>
<div class="a" style="left:1028px;top:386px;width:179px;height:6px;background:#ebebeb;border-radius:3px"></div>
<div class="a" style="left:1028px;top:386px;width:18px;height:6px;background:#3a7af0;border-radius:3px"></div>
<div class="a" style="left:1040px;top:383.5px;width:12px;height:12px;background:#fff;border:2px solid #3a7af0;border-radius:50%"></div>
<div class="inp" style="left:1215px;top:377px;width:80px;height:24px"></div>
<div class="t" style="left:1251px;top:382px;color:#777">1</div>
<div class="a" style="left:1028px;top:413px;width:84px;height:24px;background:#a4c2fa;border-radius:3px"></div>
<div class="t" style="left:1028px;top:418px;width:84px;text-align:center;color:#fff">Reset</div>
<div class="t" style="left:1028px;top:461px;color:#666">Backface culling</div>
<div class="a" style="left:1281px;top:460px;width:14px;height:14px;border:1px solid #e3e3e3;border-radius:3px"></div>
<div class="a" style="left:1012px;top:509px;width:298px;height:32px;background:#f3f3f3"></div>
<svg style="left:1020px;top:518px" width="16" height="14" viewBox="1020 518 16 14" fill="none" stroke="#555" stroke-width="1.1"><path d="M1024.2 522.6 L1028.6 527 L1033 522.6"/></svg>
<div class="t" style="left:1042px;top:520px;color:#333;font-size:12px;-webkit-text-stroke:0.2px #333">Tool Properties</div>
<div class="t" style="left:1028px;top:560px;color:#666">Color</div>
<div class="a" style="left:1028px;top:581px;width:80px;height:24px;background:#0068ff;border-radius:3px"></div>
<div class="t" style="left:1028px;top:620px;color:#666">Diameter</div>
<div class="a" style="left:1028px;top:650px;width:179px;height:6px;background:#ebebeb;border-radius:3px"></div>
<div class="a" style="left:1028px;top:650px;width:34px;height:6px;background:#3a7af0;border-radius:3px"></div>
<div class="a" style="left:1056px;top:647px;width:12px;height:12px;background:#fff;border:2px solid #3a7af0;border-radius:50%"></div>
<div class="inp" style="left:1215px;top:641px;width:80px;height:24px"></div>
<div class="t" style="left:1246px;top:646px;color:#777">0.2</div>
<div class="t" style="left:1028px;top:680px;color:#666">Height</div>
<div class="a" style="left:1028px;top:710px;width:179px;height:6px;background:#ebebeb;border-radius:3px"></div>
<div class="a" style="left:1028px;top:710px;width:34px;height:6px;background:#3a7af0;border-radius:3px"></div>
<div class="a" style="left:1056px;top:707px;width:12px;height:12px;background:#fff;border:2px solid #3a7af0;border-radius:50%"></div>
<div class="inp" style="left:1215px;top:701px;width:80px;height:24px"></div>
<div class="t" style="left:1246px;top:706px;color:#777">0.2</div>
<div class="a" style="left:1028px;top:737px;width:267px;height:6px;background:#3a7af0;border-radius:4px 4px 0 0"></div>
<div class="a" style="left:1304px;top:129px;width:4px;height:579px;background:#ebebeb;border-radius:2px"></div>
</body></html>
